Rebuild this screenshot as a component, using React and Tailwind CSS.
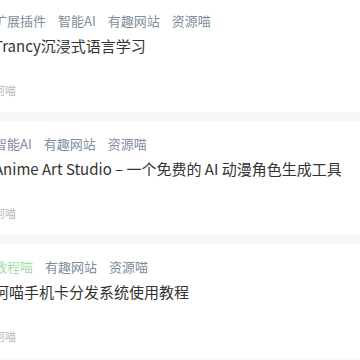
import React from 'react';

const posts = [
    {
        tags: [
            { name: '扩展插件' },
            { name: '智能AI' },
            { name: '有趣网站' },
            { name: '资源喵' },
        ],
        title: 'Trancy沉浸式语言学习',
        author: '阿喵',
    },
    {
        tags: [{ name: '智能AI' }, { name: '有趣网站' }, { name: '资源喵' }],
        title: 'Anime Art Studio – 一个免费的 AI 动漫角色生成工具',
        author: '阿喵',
    },
    {
        tags: [
            { name: '教程喵', green: true },
            { name: '有趣网站' },
            { name: '资源喵' },
        ],
        title: '阿喵手机卡分发系统使用教程',
        author: '阿喵',
    },
];

const App = () => {
    return (
        <div
            className="w-[360px] h-[360px] overflow-hidden bg-[#f6f7f8]"
            style={{ fontFamily: '"Noto Sans CJK SC", "Noto Sans", sans-serif' }}
        >
            <div className="flex flex-col gap-[9px] mt-[-2px]">
                {posts.map((post, index) => (
                    <div key={index} className="bg-white h-[114px] pt-[13px]">
                        <div className="ml-[-6px]">
                            <div className="flex gap-3 h-5 text-[13px] leading-5">
                                {post.tags.map((tag, i) => (
                                    <span
                                        key={i}
                                        className={tag.green ? 'text-[#a5dca6]' : 'text-[#7f8d9b]'}
                                    >
                                        {tag.name}
                                    </span>
                                ))}
                            </div>
                            <h3 className="mt-1 text-[15px] leading-[22px] text-[#333] whitespace-nowrap">
                                {post.title}
                            </h3>
                            <div className="mt-[25px] text-[11px] leading-4 text-[#bbbbbb]">
                                {post.author}
                            </div>
                        </div>
                    </div>
                ))}
            </div>
        </div>
    );
};

export default App;
